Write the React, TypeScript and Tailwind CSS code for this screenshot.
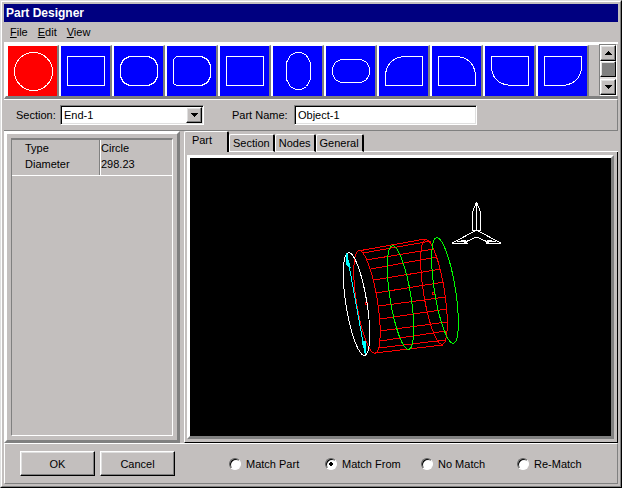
import { useState } from 'react';
import type { ReactNode } from 'react';

const RAISED = 'border border-t-white border-l-white border-b-black border-r-black shadow-[inset_-1px_-1px_0_#808080,inset_1px_1px_0_#dfdfdf]';
const SUNKEN = 'border border-t-[#808080] border-l-[#808080] border-b-white border-r-white shadow-[inset_1px_1px_0_#000,inset_-1px_-1px_0_#dfdfdf]';

const shapes: { name: string; d: string }[] = [
  { name: 'Circle', d: 'M6.5 25.5a19 19 0 1 0 38 0a19 19 0 1 0 -38 0z' },
  { name: 'Rectangle', d: 'M6.5 10.5h37v29h-37z' },
  { name: 'Rounded rectangle', d: 'M15.5 10.5h19l6 3l3 6v11l-3 6l-6 3h-19l-6 -3l-3 -6v-11l3 -6z' },
  { name: 'Rounded right', d: 'M9.5 10.5h25l6 3l3 6v11l-3 6l-6 3h-25l-3 -2v-24z' },
  { name: 'Box', d: 'M6.5 10.5h37v29h-37z' },
  { name: 'Tall oval', d: 'M13.5 16.5l4 -7l5 -3h6l5 3l4 7v17l-4 7l-5 3h-6l-5 -3l-4 -7z' },
  { name: 'Wide oval', d: 'M14.5 13.5h21l5 3l3 5v7l-3 5l-5 3h-21l-5 -3l-3 -5v-7l3 -5z' },
  { name: 'Top left arc', d: 'M43.5 10.5h-18q-16 1 -19 17v12h37z' },
  { name: 'Top right arc', d: 'M6.5 10.5h18q16 1 19 17v12h-37z' },
  { name: 'Bottom left arc', d: 'M6.5 10.5h37v29h-17q-18 -1 -20 -17z' },
  { name: 'Bottom right arc', d: 'M6.5 10.5h37v12q-2 16 -20 17h-17z' },
];

const menus = ['File', 'Edit', 'View'];
const tabs = ['Part', 'Section', 'Nodes', 'General'];
const matches = ['Match Part', 'Match From', 'No Match', 'Re-Match'];

// longitudinal lines of the wire cylinder, front rim to back rim
const ribs = [
  [358, 251, 425, 239], [363, 253, 431, 241], [366, 260, 434, 249], [371, 269, 437, 257],
  [374, 280, 441, 269], [376, 293, 444, 282], [379, 306, 446, 297], [380, 319, 447, 309],
  [380, 331, 447, 322], [380, 341, 446, 331], [379, 348, 445, 340], [375, 353, 443, 345],
];

function ScrollArrow({ up, label }: { up?: boolean; label: string }) {
  return (
    <button aria-label={label} className={`flex h-4 w-full shrink-0 items-center justify-center bg-[#c3bfbe] ${RAISED}`}>
      <svg width="7" height="4" viewBox="0 0 7 4" shapeRendering="crispEdges">
        <path d={up ? 'M3 0h1v1h1v1h1v1h1v1H0V3h1V2h1V1h1z' : 'M0 0h7v1H6v1H5v1H4v1H3V3H2V2H1V1H0z'} />
      </svg>
    </button>
  );
}

function PushButton({ children }: { children: ReactNode }) {
  return <button className={`h-[25px] w-[75px] bg-[#c3bfbe] ${RAISED}`}>{children}</button>;
}

function ShapeBar() {
  const [current, setCurrent] = useState(0);
  return (
    <div className="flex h-[57px] shrink-0 border-t-2 border-l-2 border-b-3 border-t-white border-l-white border-b-[#808080]">
      <div className="flex min-w-0 flex-1 overflow-hidden border-t border-white">
        {shapes.map((s, i) => (
          <button
            key={s.name}
            aria-label={s.name}
            onClick={() => setCurrent(i)}
            className="h-full w-[53px] shrink-0 border-t border-r-2 border-l-2 border-t-white border-r-[#808080] border-l-white"
          >
            <svg width="49" height="50" viewBox="0 0 49 50" shapeRendering="crispEdges" className={i === current ? 'bg-[#ff0000]' : 'bg-[#0000ff]'}>
              <path d={s.d} fill="none" stroke="#fff" />
            </svg>
          </button>
        ))}
      </div>
      <div className="mr-px flex w-[18px] flex-col border border-t-[#808080] border-l-[#808080] border-r-white border-b-white bg-[#e2dfdf]">
        <ScrollArrow up label="Scroll up" />
        <div className={`h-4 bg-[#808080] ${RAISED}`} />
        <div className="flex-1" />
        <ScrollArrow label="Scroll down" />
      </div>
    </div>
  );
}

function Scene() {
  return (
    <svg viewBox="190 158 421 278" className="h-full w-full" preserveAspectRatio="xMidYMid meet" fill="none" shapeRendering="crispEdges">
      <g stroke="#ff0000">
        {ribs.map(([x1, y1, x2, y2]) => (
          <line key={y1} x1={x1} y1={y1} x2={x2} y2={y2} />
        ))}
        <ellipse cx="367" cy="302" rx="10.5" ry="52" transform="rotate(-9 367 302)" />
        <ellipse cx="434" cy="292" rx="10.5" ry="53" transform="rotate(-9 434 292)" />
        <path d="M365 302h2v2h-2zM432 292h2v2h-2z" />
      </g>
      <g stroke="#00ff00">
        <ellipse cx="400.5" cy="297.5" rx="10.5" ry="52.5" transform="rotate(-9 400.5 297.5)" />
        <ellipse cx="445" cy="290.5" rx="10.5" ry="53.5" transform="rotate(-9 445 290.5)" />
      </g>
      <ellipse cx="356.5" cy="304" rx="10.5" ry="52" transform="rotate(-9 356.5 304)" stroke="#fff" />
      <path d="M347 254l18 99" stroke="#00ffff" />
      <path d="M346 253l1 12l3 2zM366 354l-4 -12l3 -1z" stroke="#00ffff" fill="#00ffff" />
      <path d="M476.5 202v29M476.5 202l-4 10v19M476.5 202l4 10v19M472.5 231l4 -1l4 1M476.5 230l-24 13h15M476.5 230l24 13h-15M476.5 237l-9 4h-6l5 2M476.5 237l9 4h6l-5 2M457 242l9 -2M496 242l-9 -2" stroke="#fff" />
    </svg>
  );
}

export default function App() {
  const [tab, setTab] = useState('Part');
  const [match, setMatch] = useState('Match From');

  return (
    <div className="flex h-screen flex-col border border-t-[#dfdfdf] border-l-[#dfdfdf] border-r-black border-b-black bg-[#c3bfbe] font-['Liberation_Sans',Arial,sans-serif] text-[11px] leading-4 text-black">
      <div className="flex min-h-0 flex-1 flex-col border border-t-white border-l-white border-r-[#808080] border-b-[#808080] p-[2px]">
        <header className="flex h-[18px] shrink-0 items-center bg-[#000080] px-[2px] text-[12px] font-bold text-white">Part Designer</header>

        <nav className="flex h-5 shrink-0 items-center gap-[10px] px-[6px]">
          {menus.map(m => (
            <button key={m}><span className="underline">{m[0]}</span>{m.slice(1)}</button>
          ))}
        </nav>

        <ShapeBar />

        <div className="flex h-8 shrink-0 items-center border-t border-r border-b border-t-white border-r-[#808080] border-b-[#808080] pl-3">
          <label htmlFor="section" className="w-11">Section:</label>
          <div className={`relative h-5 w-36 bg-white ${SUNKEN}`}>
            <select id="section" className="h-full w-full appearance-none bg-transparent pl-[3px] outline-none">
              <option>End-1</option>
            </select>
            <span className={`pointer-events-none absolute top-px right-px bottom-px flex w-4 items-center justify-center bg-[#c3bfbe] ${RAISED}`}>
              <svg width="7" height="4" viewBox="0 0 7 4" shapeRendering="crispEdges"><path d="M0 0h7v1H6v1H5v1H4v1H3V3H2V2H1V1H0z" /></svg>
            </span>
          </div>
          <label htmlFor="part-name" className="ml-7 w-[62px]">Part Name:</label>
          <input id="part-name" defaultValue="Object-1" className={`h-5 w-[183px] bg-white pl-[3px] outline-none ${SUNKEN}`} />
        </div>

        <main className="flex min-h-0 flex-1 gap-1">
          <section className="w-[176px] shrink-0 border-3 border-t-white border-l-white border-r-[#808080] border-b-[#808080] p-1">
            <div className="h-full border border-t-2 border-t-[#808080] border-l-[#808080] border-r-white border-b-white">
              <table className="w-full border-separate border-spacing-0 border-b border-white">
                <tbody>
                  <tr>
                    <th scope="row" className="w-[88px] border-r border-[#808080] pl-[13px] text-left font-normal">Type</th>
                    <td className="border-l border-white">Circle</td>
                  </tr>
                  <tr>
                    <th scope="row" className="border-r border-[#808080] pb-[3px] pl-[13px] text-left font-normal">Diameter</th>
                    <td className="border-l border-white pb-[3px]">298.23</td>
                  </tr>
                </tbody>
              </table>
            </div>
          </section>

          <section className="flex min-w-0 flex-1 flex-col">
            <div role="tablist" className="flex h-[21px] items-end">
              {tabs.map(t => (
                <button
                  key={t}
                  role="tab"
                  aria-selected={t === tab}
                  onClick={() => setTab(t)}
                  className={`rounded-t-xs border-t border-t-white border-l-white border-r-black ${
                    t === tab ? 'h-[21px] w-[45px] border-r-2 border-l pr-2 pb-1' : 'h-[18px] border-r-2 border-b border-l border-b-white px-[3px]'
                  }`}
                >
                  {t}
                </button>
              ))}
              <div className="flex-1 self-end border-b border-white" />
            </div>
            <div className="min-h-0 flex-1 border border-t-0 border-l-white border-r-black border-b-black p-[3px] pl-[2px]">
              <div className="h-full border-3 border-t-white border-l-white border-r-[#808080] border-b-[#808080] bg-black">
                <Scene />
              </div>
            </div>
          </section>
        </main>

        <footer className="flex h-[41px] shrink-0 items-center gap-[5px] border border-white border-r-[#808080] border-b-[#808080] pl-[15px]">
          <PushButton>OK</PushButton>
          <PushButton>Cancel</PushButton>
          <div className="ml-[49px] flex">
            {matches.map(m => (
              <label key={m} className="flex w-24 items-center gap-[5px]">
                <input
                  type="radio"
                  name="match"
                  checked={match === m}
                  onChange={() => setMatch(m)}
                  className="h-3 w-3 appearance-none rounded-full border border-t-[#606060] border-l-[#606060] border-r-white border-b-white bg-white shadow-[inset_1px_1px_0_#000] checked:bg-[radial-gradient(circle,#000_2px,#fff_2px)]"
                />
                {m}
              </label>
            ))}
          </div>
        </footer>
      </div>
    </div>
  );
}
